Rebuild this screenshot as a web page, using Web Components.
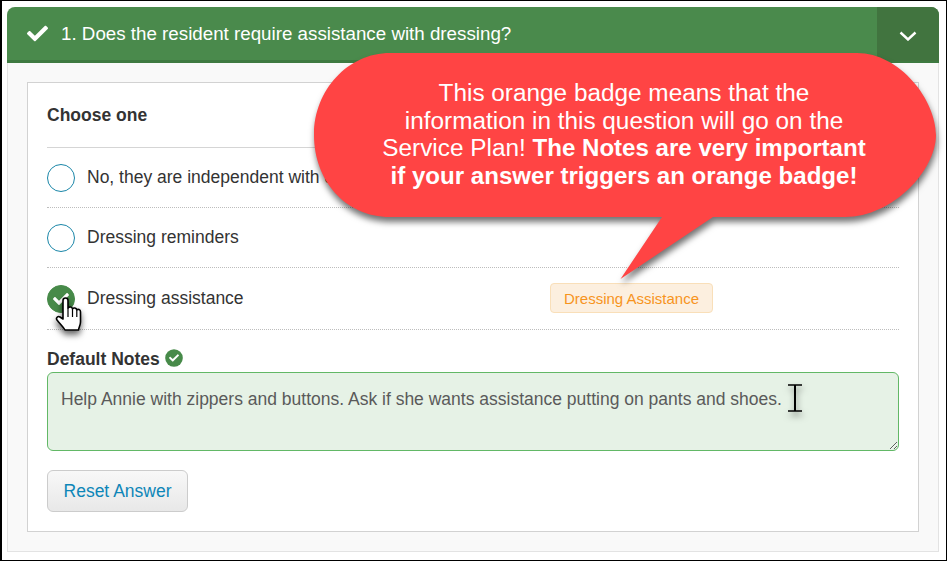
<!DOCTYPE html>
<html><head><meta charset="utf-8"><style>
html,body{margin:0;padding:0;background:#fff}
body{width:947px;height:561px;overflow:hidden;font-family:"Liberation Sans",Arial,sans-serif;color:#333}
</style></head><body>
<shot-frame>
  <question-panel title-text="1. Does the resident require assistance with dressing?">
    <choice-option>No, they are independent with dressing</choice-option>
    <choice-option>Dressing reminders</choice-option>
    <choice-option checked tall badge="Dressing Assistance">Dressing assistance</choice-option>
    <notes-field label="Default Notes" text="Help Annie with zippers and buttons. Ask if she wants assistance putting on pants and shoes."></notes-field>
    <reset-button>Reset Answer</reset-button>
  </question-panel>
  <speech-callout>This orange badge means that the<br>information in this question will go on the<br>Service Plan! <b>The Notes are very important<br>if your answer triggers an orange badge!</b></speech-callout>
  <cursor-hand></cursor-hand>
  <cursor-ibeam></cursor-ibeam>
</shot-frame>
<script>
const CHECK='M173.898 439.404l-166.4-166.4c-9.997-9.997-9.997-26.206 0-36.204l36.203-36.204c9.997-9.998 26.207-9.998 36.204 0L192 312.69 432.095 72.596c9.997-9.997 26.207-9.997 36.204 0l36.203 36.204c9.997 9.997 9.997 26.206 0 36.204l-294.4 294.401c-9.998 9.997-26.207 9.997-36.204-.001z';
function def(name,html){
  customElements.define(name,class extends HTMLElement{
    connectedCallback(){
      if(this.shadowRoot)return;
      const r=this.attachShadow({mode:'open'});
      r.innerHTML=typeof html==='function'?html(this):html;
    }
  });
}
def('shot-frame',`<style>:host{display:block;position:relative;box-sizing:border-box;width:947px;height:561px;border:1px solid #000;border-left-width:2px;padding:6px 7px 8px 5px;background:#fff}</style><slot></slot>`);
def('question-panel',el=>`<style>
:host{display:block;box-sizing:border-box;height:545px;background:#f9f9f9;border:1px solid #e3e3e3;border-top:0;border-radius:8px 8px 0 0}
header{display:flex;height:56px;margin:0 -1px;box-sizing:border-box;background:#4a8a4c;border-bottom:3px solid #3e7a41;border-radius:8px 8px 0 0;color:#fff;font-size:18.75px}
.t{flex:1;display:flex;align-items:center;gap:13px;padding-left:20px;padding-top:1px}
.t svg{width:21px;height:21px;fill:#fff;flex:none;margin-top:-2px}
.tg{width:62px;display:flex;align-items:center;justify-content:center;background:#41743f;border-radius:0 8px 0 0;margin-bottom:-1px}
.tg svg{width:18px;height:10px;margin-top:4px}
.card{margin:19px 19px 0 19px;box-sizing:border-box;height:450px;background:#fff;border:1px solid #d2d2d2;padding:0 19px}
h3{margin:0;height:65px;box-sizing:border-box;border-bottom:1px solid #d5d5d5;font-size:17.5px;line-height:64px;font-weight:bold;color:#333}
</style>
<header><div class="t"><svg viewBox="0 0 512 512"><path d="${CHECK}"/></svg><span>${el.getAttribute('title-text')}</span></div>
<div class="tg"><svg viewBox="0 0 18 10"><path d="M1.5 1.5 9 8.500 16.500 1.500" fill="none" stroke="#fff" stroke-width="2.4"/></svg></div></header>
<div class="card"><h3>Choose one</h3><slot></slot></div>`);
def('choice-option',el=>{
 const c=el.hasAttribute('checked'),b=el.getAttribute('badge'),tall=el.hasAttribute('tall');
 return `<style>
:host{display:grid;grid-template-columns:503px 1fr;align-items:center;box-sizing:border-box;height:${tall?62:60}px;border-bottom:1px dotted #bdbdbd;font-size:17.5px;color:#333}
.l{display:flex;align-items:center;gap:12px}
.r{width:28px;height:28px;box-sizing:border-box;border-radius:50%;border:1.5px solid #1a86a8;background:#fff;flex:none;display:flex;align-items:center;justify-content:center}
.r.on{background:#478a49;border-color:#478a49}
.r svg{width:16px;height:16px;fill:#fff}
.b{box-sizing:border-box;width:163px;height:30px;margin-top:-1px;display:flex;align-items:center;justify-content:center;background:#fcefdf;border:1px solid #f9dfb9;border-radius:4px;color:#f7941d;font-size:15px}
</style><div class="l"><span class="r ${c?'on':''}">${c?`<svg viewBox="0 0 512 512"><path d="${CHECK}"/></svg>`:''}</span><span><slot></slot></span></div>${b?`<span class="b">${b}</span>`:''}`;
});
def('notes-field',el=>`<style>
:host{display:block}
.lb{display:flex;align-items:center;gap:5px;height:42px;box-sizing:border-box;padding-top:17px;font-size:17.5px;font-weight:bold;color:#333}
.lb svg{width:18px;height:18px;margin-top:-3px}
textarea{display:block;box-sizing:border-box;width:852px;height:79px;margin:0;padding:15px 13px;border:1px solid #62b866;border-radius:6px;background:#e6f2e6;color:#5a5a5a;font:17.5px "Liberation Sans",Arial,sans-serif;line-height:22px;resize:vertical;outline:0;overflow:hidden}
</style><div class="lb"><span>${el.getAttribute('label')}</span><svg viewBox="0 0 18 18"><circle cx="9" cy="9" r="8.8" fill="#478a49"/><g transform="translate(4 4) scale(.0195)"><path fill="#fff" d="${CHECK}"/></g></svg></div><textarea>${el.getAttribute('text')}</textarea>`);
def('reset-button',`<style>
:host{display:block;margin-top:19px}
button{display:block;box-sizing:border-box;width:141px;height:42px;padding:0;border:1px solid #ccc;border-radius:6px;background:linear-gradient(#f8f8f8,#e8e8e8);color:#0e86b8;font:17.5px "Liberation Sans",Arial,sans-serif}
</style><button><slot></slot></button>`);
def('speech-callout',`<style>
:host{position:absolute;left:298px;top:39px;width:640px;height:250px;display:block}
svg{position:absolute;left:0;top:0;overflow:visible;filter:drop-shadow(1px 5px 3px rgba(0,0,0,.55))}
.x{position:absolute;left:12px;top:39px;width:624px;text-align:center;color:#fff;font-size:24.35px;line-height:27.5px}
::slotted(b){font-size:24.09px}
</style><svg width="640" height="250" viewBox="0 0 640 250"><path fill="#ff4444" d="M90 13H557C600 13 636 60 636 95S593 177 545 177H413L320.500 239 362 177H90C45 177 14 140 14 95C14 50 48 13 90 13Z"/></svg><div class="x"><slot></slot></div>`);
def('cursor-hand',`<style>:host{position:absolute;left:50px;top:296px;width:32px;height:42px;display:block}svg{overflow:visible;filter:drop-shadow(0 4px 3px rgba(0,0,0,.6))}</style>
<svg width="32" height="42" viewBox="0 0 32 42"><path fill="#fff" stroke="#000" stroke-width="1.6" stroke-linejoin="round" d="M11 22V3.500a2.500 2.500 0 0 1 5 0V11c1-1.500 4-1.500 4.500.8 1-1.300 3.900-1 4.300 1 1.200-.9 3.700-.4 3.700 2V25c0 3-1.500 5-2 8H13c-1.500-3-5-6-8-10-1.500-2 .8-4.500 3-3z"/><path stroke="#000" stroke-width="1.2" fill="none" d="M16 11v9M20.500 12v8M24.800 13v7"/></svg>`);
def('cursor-ibeam',`<style>:host{position:absolute;left:785px;top:383px;width:16px;height:28px;display:block}svg{overflow:visible;filter:drop-shadow(1px 4px 3px rgba(0,0,0,.5))}</style>
<svg width="16" height="28" viewBox="0 0 16 28"><path fill="none" stroke="#000" stroke-width="1.600" d="M1 1H15M1 27H15"/><path fill="none" stroke="#000" stroke-width="2" d="M8 1V27"/></svg>`);
</script>
</body></html>
